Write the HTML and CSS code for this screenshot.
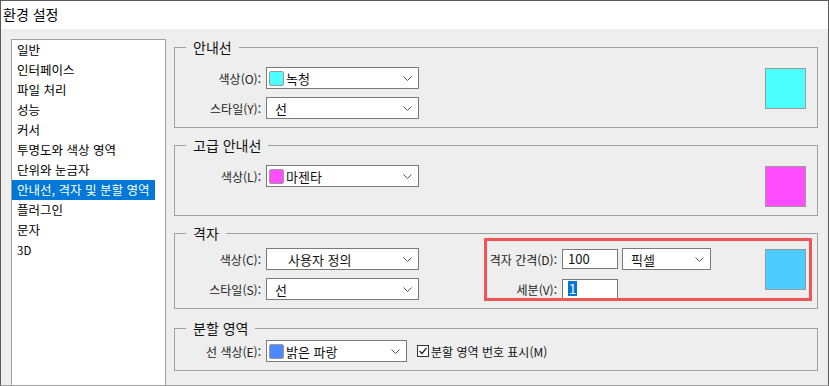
FILE: index.html
```html
<!DOCTYPE html>
<html lang="ko">
<head>
  <meta charset="UTF-8" />
  <title>환경 설정</title>
  <link rel="stylesheet" href="styles.css">
</head>
<body>

<div class="window">
  <div class="titlebar">환경 설정</div>

  <div class="content">
    <ul class="list">
      <li><span>일반</span></li>
      <li><span>인터페이스</span></li>
      <li><span>파일 처리</span></li>
      <li><span>성능</span></li>
      <li><span>커서</span></li>
      <li><span>투명도와 색상 영역</span></li>
      <li><span>단위와 눈금자</span></li>
      <li class="selected"><span>안내선, 격자 및 분할 영역</span></li>
      <li><span>플러그인</span></li>
      <li><span>문자</span></li>
      <li class="latin"><span>3D</span></li>
    </ul>

    <div class="panel">
      <!-- 안내선 -->
      <fieldset class="group group-guides">
        <legend>안내선</legend>
        <div class="group-body">
          <div class="fields">
            <div class="row">
              <label>색상(O):</label>
              <div class="combo">
                <span class="chip cyan"></span>녹청
                <svg class="chevron" width="9" height="5" viewBox="0 0 9 5"><polyline points="0.5,0.5 4.5,4.5 8.5,0.5" /></svg>
              </div>
            </div>
            <div class="row">
              <label>스타일(Y):</label>
              <div class="combo plain">
                선
                <svg class="chevron" width="9" height="5" viewBox="0 0 9 5"><polyline points="0.5,0.5 4.5,4.5 8.5,0.5" /></svg>
              </div>
            </div>
          </div>
          <div class="swatch cyan"></div>
        </div>
      </fieldset>

      <!-- 고급 안내선 -->
      <fieldset class="group group-smart">
        <legend>고급 안내선</legend>
        <div class="group-body">
          <div class="fields">
            <div class="row">
              <label>색상(L):</label>
              <div class="combo">
                <span class="chip magenta"></span>마젠타
                <svg class="chevron" width="9" height="5" viewBox="0 0 9 5"><polyline points="0.5,0.5 4.5,4.5 8.5,0.5" /></svg>
              </div>
            </div>
          </div>
          <div class="swatch magenta"></div>
        </div>
      </fieldset>

      <!-- 격자 -->
      <fieldset class="group group-grid">
        <legend>격자</legend>
        <div class="group-body">
          <div class="fields">
            <div class="row">
              <label>색상(C):</label>
              <div class="combo custom">
                사용자 정의
                <svg class="chevron" width="9" height="5" viewBox="0 0 9 5"><polyline points="0.5,0.5 4.5,4.5 8.5,0.5" /></svg>
              </div>
            </div>
            <div class="row">
              <label>스타일(S):</label>
              <div class="combo plain">
                선
                <svg class="chevron" width="9" height="5" viewBox="0 0 9 5"><polyline points="0.5,0.5 4.5,4.5 8.5,0.5" /></svg>
              </div>
            </div>
          </div>

          <div class="grid-right">
            <div class="spacing">
              <div class="row">
                <label class="short">격자 간격(D):</label>
                <div class="input">100</div>
                <div class="combo unit plain">
                  픽셀
                  <svg class="chevron" width="9" height="5" viewBox="0 0 9 5"><polyline points="0.5,0.5 4.5,4.5 8.5,0.5" /></svg>
                </div>
              </div>
              <div class="row">
                <label class="short">세분(V):</label>
                <div class="input"><span class="sel">1</span></div>
              </div>
            </div>
            <div class="swatch sky"></div>
            <span class="mark"></span>
          </div>
        </div>
      </fieldset>

      <!-- 분할 영역 -->
      <fieldset class="group group-slices">
        <legend>분할 영역</legend>
        <div class="group-body">
          <div class="row">
            <label>선 색상(E):</label>
            <div class="combo narrow">
              <span class="chip blue"></span>밝은 파랑
              <svg class="chevron" width="9" height="5" viewBox="0 0 9 5"><polyline points="0.5,0.5 4.5,4.5 8.5,0.5" /></svg>
            </div>
            <span class="checkbox">
              <svg width="10" height="10" viewBox="0 0 10 10"><polyline points="1.5,5 4,7.5 8.5,2" /></svg>
            </span>
            <span class="check-label">분할 영역 번호 표시(M)</span>
          </div>
        </div>
      </fieldset>
    </div>
  </div>
</div>

</body>
</html>
```

FILE: styles.css
```css
/* Reset */
* {
  box-sizing: border-box;
  margin: 0;
  padding: 0;
}

body {
  font-family: "Noto Sans CJK KR", "Noto Sans", sans-serif;
  font-size: 12px;
  color: #000;
  background: #eeeeee;
}

/* Window frame */
.window {
  width: 829px;
  height: 386px;
  display: flex;
  flex-direction: column;
  background: #eeeeee;
  border: 1px solid #5a5a5a;
  border-bottom-color: #a0a0a0;
}

.titlebar {
  height: 28px;
  flex-shrink: 0;
  background: #fff;
  padding-left: 2px;
  font-size: 14px;
  line-height: 26px;
  color: #000;
}

.content {
  flex: 1;
  display: flex;
  min-height: 0;
}

/* Category list */
.list {
  list-style: none;
  width: 155px;
  margin: 10px 0 0 10px;
  background: #fff;
  border: 1px solid #a0a0a0;
  border-bottom: none;
}

.list li {
  height: 20px;
  line-height: 20px;
  font-size: 12.5px;
}

.list li span {
  display: inline-block;
  padding: 0 5px;
}

.list li.selected span {
  background: #0078d7;
  color: #fff;
}

.list li.latin {
  font-size: 11.5px;
}

/* Right panel */
.panel {
  flex: 1;
  padding-top: 8px;
  margin: 0 10px 0 8px;
}

.group {
  border: 1px solid #a0a0a0;
  padding: 0 0 8px 0;
  margin: 0 0 7px 0;
  min-width: 0;
}

.group legend {
  margin-left: 11px;
  padding: 0 7px;
  font-size: 14px;
  line-height: 20px;
  color: #111;
}

.group-guides { padding-top: 10px; }
.group-smart  { padding-top: 10px; }
.group-grid   { padding-top: 5px; margin-bottom: 9px; }
.group-slices { padding-top: 2px; }

.group-body {
  display: flex;
  align-items: flex-start;
}

.fields {
  display: flex;
  flex-direction: column;
  gap: 8px;
}

.row {
  display: flex;
  align-items: center;
  height: 22px;
}

.row label {
  width: 86px;
  flex-shrink: 0;
  margin-right: 5px;
  text-align: right;
  white-space: nowrap;
  color: #222;
  font-size: 12px;
}

.row label.short {
  width: 70px;
}

/* Combo boxes */
.combo {
  width: 153px;
  height: 22px;
  display: flex;
  align-items: center;
  background: #fff;
  border: 1px solid #7a7a7a;
  padding-left: 2px;
  font-size: 13px;
  color: #111;
}

.combo.plain { padding-left: 8px; }
.combo.custom { padding-left: 21px; }
.combo.narrow { width: 141px; }
.combo.unit { width: 89px; margin-left: 4px; }

.chevron {
  margin-left: auto;
  margin-right: 6px;
  fill: none;
  stroke: #555;
  stroke-width: 1;
}

.chip {
  width: 15px;
  height: 15px;
  margin-right: 2px;
  border: 1px solid #9a9a9a;
  border-radius: 2px;
}

.cyan { background: #4dffff; }
.magenta { background: #ff4dff; }
.blue { background: #4d88ff; }
.sky { background: #4dccff; }

/* Big colour swatches */
.swatch {
  width: 41px;
  height: 41px;
  margin: 1px 11px 0 auto;
  border: 1px solid #9a9a9a;
}

/* Grid spacing fields */
.grid-right {
  flex: 1;
  display: flex;
  align-items: flex-start;
  margin-left: 68px;
  position: relative;
}

.spacing {
  display: flex;
  flex-direction: column;
  gap: 8px;
}

.input {
  width: 56px;
  height: 20px;
  background: #fff;
  border: 1px solid #7a7a7a;
  padding-left: 5px;
  font-size: 13px;
  line-height: 18px;
  color: #111;
}

.input .sel {
  display: inline-block;
  background: #0078d7;
  color: #fff;
  padding: 0 1px;
  line-height: 15px;
}

/* Red annotation box */
.mark {
  position: absolute;
  top: -10px;
  left: -3px;
  right: 5px;
  bottom: -1px;
  border: 3px solid #f05454;
  pointer-events: none;
}

/* Checkbox */
.checkbox {
  width: 12px;
  height: 12px;
  margin-left: 10px;
  border: 1px solid #333;
  background: #fff;
  display: flex;
  align-items: center;
  justify-content: center;
}

.checkbox svg {
  fill: none;
  stroke: #222;
  stroke-width: 1.2;
}

.check-label {
  margin-left: 2px;
  font-size: 12px;
  color: #111;
}
```
